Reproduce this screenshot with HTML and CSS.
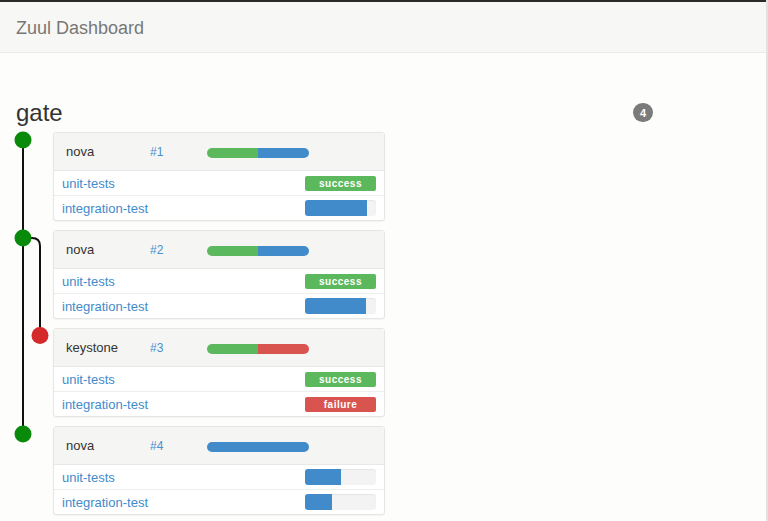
FILE: index.html
```html
<!DOCTYPE html>
<html>
<head>
<meta charset="utf-8">
<link rel="stylesheet" href="styles.css">
</head>
<body>
<div class="page">
  <div class="topline"></div>
  <nav class="navbar"><span class="brand">Zuul Dashboard</span></nav>
  <main class="main">
    <div class="queue">
      <div class="queue-head">
        <h2 class="queue-name">gate</h2>
        <span class="badge">4</span>
      </div>
      <div class="items">
        <svg class="tree" width="40" height="320" viewBox="0 0 40 320">
          <path d="M7 8 V302" stroke="#111" stroke-width="2" fill="none"/>
          <path d="M7 106 H16 Q24 106 24 114 V203" stroke="#111" stroke-width="2" fill="none"/>
          <circle cx="7" cy="8" r="8.5" fill="#0a8a0a"/>
          <circle cx="7" cy="106" r="8.5" fill="#0a8a0a"/>
          <circle cx="24" cy="203.5" r="8.5" fill="#d42a2a"/>
          <circle cx="7" cy="302" r="8.5" fill="#0a8a0a"/>
        </svg>

        <div class="card">
          <div class="card-head">
            <span class="proj">nova</span>
            <a class="num">#1</a>
            <div class="bar"><div class="seg green" style="width:50%"></div><div class="seg blue" style="width:50%"></div></div>
          </div>
          <div class="job"><a class="job-name">unit-tests</a><span class="label ok">success</span></div>
          <div class="job"><a class="job-name">integration-test</a><div class="progress"><div class="fill" style="width:88%"></div></div></div>
        </div>

        <div class="card">
          <div class="card-head">
            <span class="proj">nova</span>
            <a class="num">#2</a>
            <div class="bar"><div class="seg green" style="width:50%"></div><div class="seg blue" style="width:50%"></div></div>
          </div>
          <div class="job"><a class="job-name">unit-tests</a><span class="label ok">success</span></div>
          <div class="job"><a class="job-name">integration-test</a><div class="progress"><div class="fill" style="width:86%"></div></div></div>
        </div>

        <div class="card">
          <div class="card-head">
            <span class="proj">keystone</span>
            <a class="num">#3</a>
            <div class="bar"><div class="seg green" style="width:50%"></div><div class="seg red" style="width:50%"></div></div>
          </div>
          <div class="job"><a class="job-name">unit-tests</a><span class="label ok">success</span></div>
          <div class="job"><a class="job-name">integration-test</a><span class="label fail">failure</span></div>
        </div>

        <div class="card">
          <div class="card-head">
            <span class="proj">nova</span>
            <a class="num">#4</a>
            <div class="bar"><div class="seg blue" style="width:100%"></div></div>
          </div>
          <div class="job"><a class="job-name">unit-tests</a><div class="progress"><div class="fill" style="width:51%"></div></div></div>
          <div class="job"><a class="job-name">integration-test</a><div class="progress"><div class="fill" style="width:38%"></div></div></div>
        </div>
      </div>
    </div>
  </main>
</div>
</body>
</html>
```

FILE: styles.css
```css
html, body {
  margin: 0;
  padding: 0;
}
body {
  background: #fdfdfb;
  font-family: "Liberation Sans", Arial, sans-serif;
  color: #333;
}
.page {
  width: 766px;
  min-height: 521px;
  border-right: 2px solid #e2e2e0;
}
.topline {
  height: 2px;
  background: #2b2b2b;
}
.navbar {
  height: 50px;
  background: #f7f7f5;
  border-bottom: 1px solid #ebebe9;
  display: flex;
  align-items: center;
  padding-left: 16px;
}
.brand {
  font-size: 18px;
  color: #777;
  position: relative;
  top: 1px;
}
.main {
  padding: 46px 16px 0 16px;
}
.queue {
  width: 637px;
}
.queue-head {
  display: flex;
  justify-content: space-between;
  align-items: center;
  height: 27px;
  margin-bottom: 6px;
}
.queue-name {
  margin: 0;
  font-size: 24px;
  font-weight: normal;
  line-height: 27px;
  color: #333;
}
.badge {
  width: 20px;
  height: 19px;
  border-radius: 10px;
  background: #7b7b7b;
  color: #fff;
  font-size: 11px;
  font-weight: bold;
  display: flex;
  align-items: center;
  justify-content: center;
}
.items {
  position: relative;
  padding-left: 37px;
  display: flex;
  flex-direction: column;
  gap: 9px;
}
.tree {
  position: absolute;
  left: 0;
  top: 0;
  overflow: visible;
}
.card {
  width: 330px;
  background: #fff;
  border: 1px solid #e6e6e4;
  border-radius: 3px;
  box-shadow: 0 1px 1px rgba(0,0,0,0.04);
}
.card-head {
  height: 37px;
  background: #f5f5f4;
  border-bottom: 1px solid #e8e8e6;
  display: flex;
  align-items: center;
  padding-left: 12px;
}
.proj {
  width: 84px;
  font-size: 13px;
  color: #333;
}
.num {
  width: 57px;
  font-size: 12px;
  color: #4a8fcb;
}
.bar {
  width: 102px;
  height: 10px;
  border-radius: 5px;
  overflow: hidden;
  display: flex;
  margin-top: 2px;
}
.seg { height: 100%; }
.green { background: #5cb85c; }
.blue { background: #428bca; }
.red { background: #d9534f; }
.job {
  height: 24px;
  display: flex;
  align-items: center;
  justify-content: space-between;
  padding: 0 8px 0 8px;
}
.job + .job {
  border-top: 1px solid #eeeeec;
}
.job-name {
  font-size: 13px;
  color: #428bca;
}
.label {
  width: 71px;
  height: 15px;
  border-radius: 2px;
  color: #fff;
  font-size: 10px;
  font-weight: bold;
  letter-spacing: 0.5px;
  display: flex;
  align-items: center;
  justify-content: center;
}
.ok { background: #5cb85c; }
.fail { background: #d9534f; }
.progress {
  width: 71px;
  height: 16px;
  border-radius: 3px;
  background: #f3f3f3;
  overflow: hidden;
  box-shadow: inset 0 1px 1px rgba(0,0,0,0.06);
}
.fill {
  height: 100%;
  background: #428bca;
}
```
